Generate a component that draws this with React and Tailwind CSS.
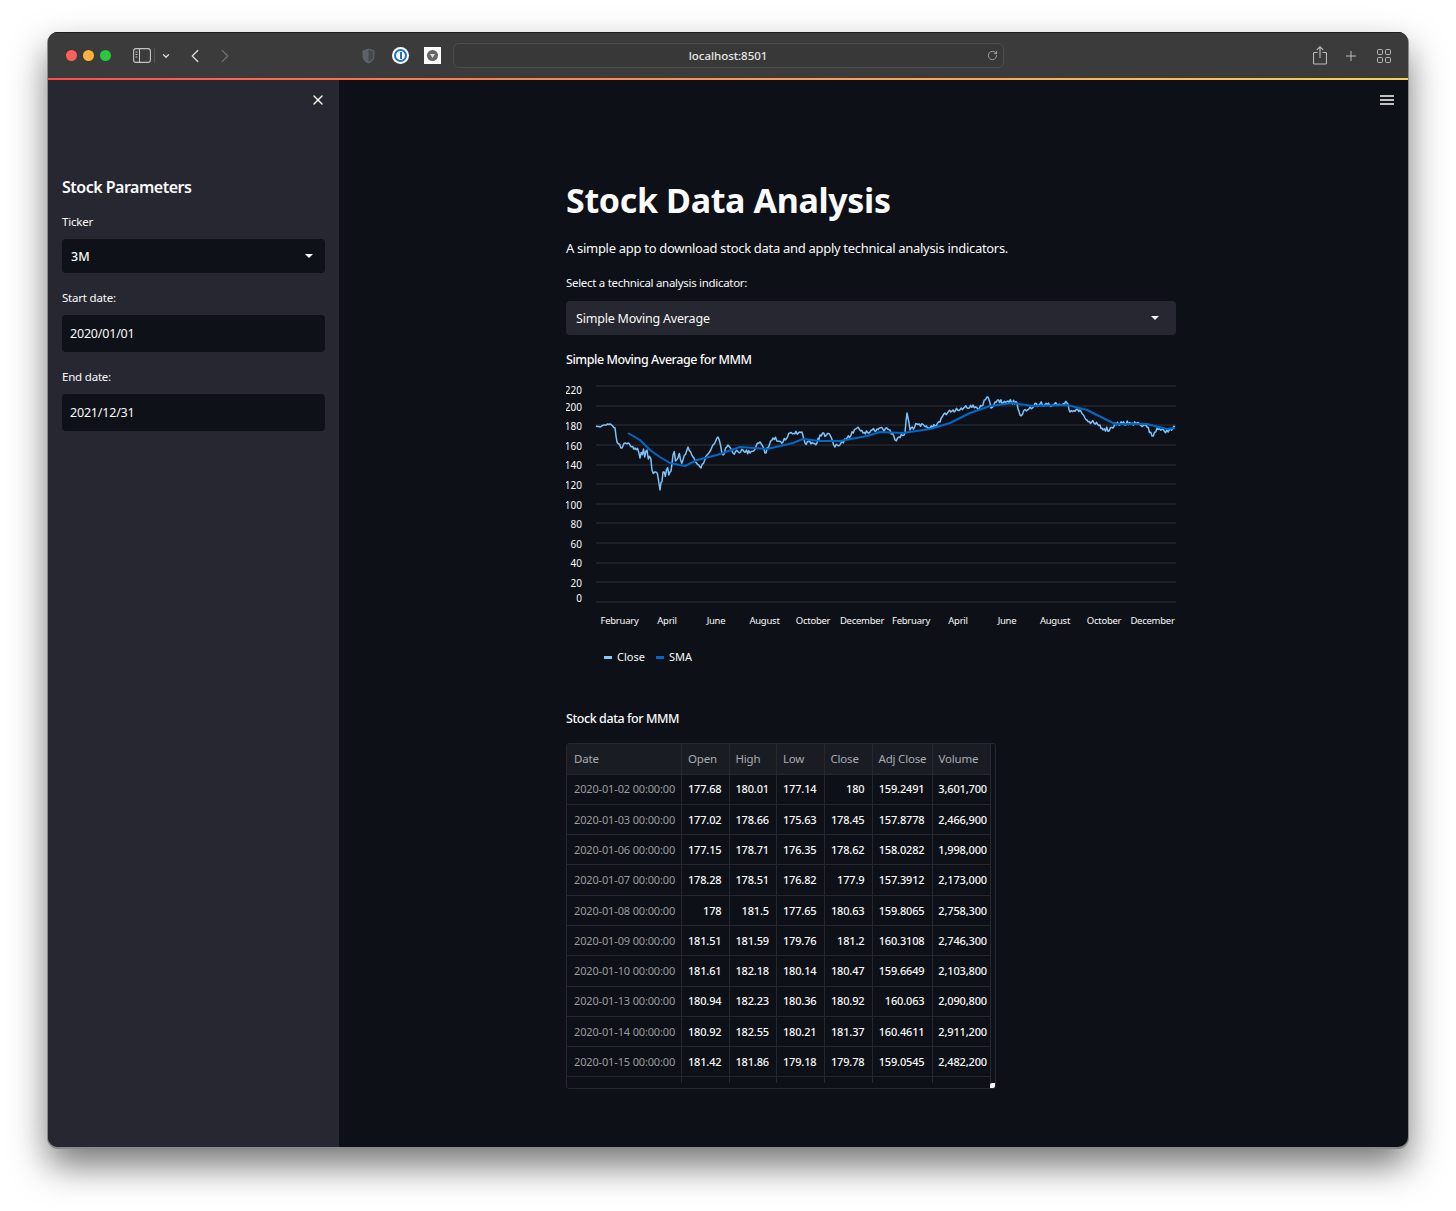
import { X, ChevronDown, ChevronLeft, ChevronRight, Plus, RotateCw } from 'lucide-react';

const closeKeys = [
  [596, 426], [600, 427], [604, 425], [610, 424], [615, 428], [617, 442], [622, 448], [625, 443], [628, 443],
  [635, 448], [640, 458], [647, 450], [652, 470], [656, 472], [660, 490], [663, 472], [670, 472], [673, 455],
  [683, 460], [688, 447], [693, 457], [701, 468], [707, 455], [712, 447], [718, 437], [723, 455], [728, 445],
  [733, 453], [743, 450], [750, 453], [760, 442], [765, 453], [773, 438], [783, 442], [790, 433], [802, 432],
  [805, 443], [817, 443], [820, 435], [830, 435], [835, 447], [847, 438], [857, 428], [863, 433], [870, 432],
  [877, 429], [890, 430], [895, 440], [905, 433], [907, 413], [910, 430], [917, 424], [930, 428], [940, 422],
  [945, 413], [953, 410], [973, 405], [978, 410], [988, 397], [991, 408], [995, 402], [1008, 401], [1017, 403],
  [1020, 415], [1030, 407], [1040, 404], [1057, 405], [1067, 403], [1070, 412], [1080, 410], [1087, 420],
  [1100, 425], [1103, 430], [1113, 428], [1115, 423], [1137, 423], [1147, 427], [1152, 436], [1157, 428],
  [1168, 432], [1175, 427],
];

const smaPoints = [
  [628, 433], [640, 440], [650, 450], [660, 457], [670, 463], [685, 466], [697, 460], [717, 455], [740, 447],
  [767, 449], [793, 443], [803, 439], [820, 441], [840, 441], [867, 436], [880, 432], [903, 433], [930, 429],
  [950, 423], [970, 413], [990, 406], [1013, 403], [1033, 406], [1067, 405], [1087, 410], [1103, 418],
  [1115, 424], [1147, 424], [1167, 429], [1175, 428],
];

// wiggle the close line between the key points so it reads like daily prices
function buildClose() {
  const pts = [];
  let seed = 7;
  for (let i = 0; i < closeKeys.length - 1; i++) {
    const [x1, y1] = closeKeys[i];
    const [x2, y2] = closeKeys[i + 1];
    const steps = Math.max(1, Math.round((x2 - x1) / 1.2));
    for (let s = 0; s < steps; s++) {
      seed = (seed * 16807) % 2147483647;
      const t = s / steps;
      const amp = x1 > 630 && x1 < 675 ? 6.5 : x1 < 615 ? 0.6 : 2.2;
      const n = s === 0 ? 0 : ((seed % 1000) / 1000 - 0.5) * amp * 2;
      pts.push(`${(x1 + (x2 - x1) * t).toFixed(1)},${(y1 + (y2 - y1) * t + n).toFixed(1)}`);
    }
  }
  pts.push('1175,427');
  return pts.join(' ');
}

const yTicks = [
  ['220', 386, 390], ['200', 406, 407], ['180', 425, 426], ['160', 445, 446], ['140', 465, 465.5], ['120', 484, 485],
  ['100', 504, 505], ['80', 523, 524], ['60', 543, 544], ['40', 563, 563.5], ['20', 582, 583], ['0', 602, 598],
];

const xTicks = [
  ['February', 619.5], ['April', 667], ['June', 716], ['August', 764.5], ['October', 813], ['December', 862],
  ['February', 911], ['April', 958], ['June', 1007], ['August', 1055], ['October', 1104], ['December', 1152.5],
];

const columns = ['Open', 'High', 'Low', 'Close', 'Adj Close', 'Volume'];

const rows = [
  ['2020-01-02 00:00:00', '177.68', '180.01', '177.14', '180', '159.2491', '3,601,700'],
  ['2020-01-03 00:00:00', '177.02', '178.66', '175.63', '178.45', '157.8778', '2,466,900'],
  ['2020-01-06 00:00:00', '177.15', '178.71', '176.35', '178.62', '158.0282', '1,998,000'],
  ['2020-01-07 00:00:00', '178.28', '178.51', '176.82', '177.9', '157.3912', '2,173,000'],
  ['2020-01-08 00:00:00', '178', '181.5', '177.65', '180.63', '159.8065', '2,758,300'],
  ['2020-01-09 00:00:00', '181.51', '181.59', '179.76', '181.2', '160.3108', '2,746,300'],
  ['2020-01-10 00:00:00', '181.61', '182.18', '180.14', '180.47', '159.6649', '2,103,800'],
  ['2020-01-13 00:00:00', '180.94', '182.23', '180.36', '180.92', '160.063', '2,090,800'],
  ['2020-01-14 00:00:00', '180.92', '182.55', '180.21', '181.37', '160.4611', '2,911,200'],
  ['2020-01-15 00:00:00', '181.42', '181.86', '179.18', '179.78', '159.0545', '2,482,200'],
];

const colWidths = ['w-[114.500px]', 'w-[47.500px]', 'w-[47.500px]', 'w-[47.500px]', 'w-[48px]', 'w-[60px]', 'w-[58.500px]'];

function Caret() {
  return (
    <svg width="8" height="4" viewBox="0 0 8 4" className="shrink-0">
      <path d="M0 0h8L4 4z" fill="#fafafa" />
    </svg>
  );
}

function Toolbar() {
  return (
    <div className="relative flex h-[46px] items-center border-t border-[#1e1e1e] bg-[#3b3b3b] pl-[18px] pr-[16px] text-[#c9c9c9]">
      <div className="flex gap-[6px]">
        <span className="h-[11px] w-[11px] rounded-full bg-[#fe5f57]" />
        <span className="h-[11px] w-[11px] rounded-full bg-[#fdb03d]" />
        <span className="h-[11px] w-[11px] rounded-full bg-[#29c83f]" />
      </div>
      <svg width="18" height="15" viewBox="0 0 18 15" fill="none" className="ml-[22px]">
        <rect x="0.6" y="0.6" width="16.8" height="13.8" rx="2.5" stroke="#c4c4c4" strokeWidth="1.1" />
        <path d="M6.5 1v13" stroke="#c4c4c4" strokeWidth="1.1" />
        <path d="M2.5 4h2M2.5 6.5h2M2.5 9h2" stroke="#c4c4c4" />
      </svg>
      <span className="ml-[3px] h-[15px] w-px bg-[#555555]" />
      <ChevronDown size={10} strokeWidth={3} className="ml-[6px] text-[#dddddd]" />
      <ChevronLeft size={22} strokeWidth={1.5} className="ml-[13px] text-[#d5d5d5]" />
      <ChevronRight size={22} strokeWidth={1.5} className="ml-[8px] text-[#6d6d6d]" />
      <svg width="13" height="16" viewBox="0 0 13 16" className="ml-[126px]">
        <path d="M6.5 0.5 12.5 2.5V8c0 3.5-2.5 6-6 7.5C3 14 .5 11.5.5 8V2.5z" fill="#5d6168" />
        <path d="M6.5 2 11.3 3.4V8c0 2.7-1.9 4.8-4.8 6.2z" fill="#44474c" />
      </svg>
      <div className="ml-[17px] flex h-[17px] w-[17px] items-center justify-center rounded-full bg-white">
        <div className="flex h-[13px] w-[13px] items-center justify-center rounded-full border-2 border-[#1a6fd0]">
          <span className="h-[7px] w-[2px] bg-[#1a6fd0]" />
        </div>
      </div>
      <div className="ml-[15px] flex h-[17px] w-[17px] items-center justify-center bg-white">
        <div className="flex h-[11px] w-[11px] items-center justify-center rounded-full bg-[#666666]">
          <svg width="5" height="4" viewBox="0 0 5 4"><path d="M0 0h5L2.500 4z" fill="#dddddd" /></svg>
        </div>
      </div>
      <div className="ml-[12px] flex h-[25px] w-[551px] items-center rounded-[6px] border border-[#4e4e4e] bg-[#383838] pr-[5px]">
        <span className="flex-1 pl-[15px] text-center text-[11.500px] font-medium tracking-[-0.05px] text-[#e6e6e6]">localhost:8501</span>
        <RotateCw size={11} strokeWidth={1.6} className="text-[#c4c4c4]" />
      </div>
      <svg width="14" height="19" viewBox="0 0 14 19" fill="none" className="ml-[309px]" stroke="#bdbdbd" strokeWidth="1.1">
        <path d="M4.500 6.500H1.500a1 1 0 0 0-1 1v9.500a1 1 0 0 0 1 1h11a1 1 0 0 0 1-1V7.500a1 1 0 0 0-1-1H9.500" />
        <path d="M7 12V.8M3.800 3.800 7 .8l3.200 3" />
      </svg>
      <Plus size={16} strokeWidth={1.3} className="ml-[16px] text-[#cfcfcf]" />
      <svg width="14" height="14" viewBox="0 0 14 14" fill="none" stroke="#bdbdbd" className="ml-[18px]">
        <rect x="0.500" y="0.500" width="5" height="5" rx="1" />
        <rect x="8.500" y="0.500" width="5" height="5" rx="1" />
        <rect x="0.500" y="8.500" width="5" height="5" rx="1" />
        <rect x="8.500" y="8.500" width="5" height="5" rx="1" />
      </svg>
    </div>
  );
}

function Sidebar() {
  return (
    <aside className="relative w-[291px] shrink-0 bg-[#262730] px-[14px] pt-[97px] text-[#fafafa]">
      <X size={16} strokeWidth={2} className="absolute right-[13px] top-[12px] text-[#fafafa]" />
      <h2 className="text-[16px] font-semibold leading-[20px] tracking-[-0.5px]">Stock Parameters</h2>
      <label className="mt-[17px] block text-[11.500px] leading-[16px] tracking-[-0.2px]">Ticker</label>
      <div className="mt-[9px] flex h-[34px] w-[263px] items-center justify-between rounded-[4px] bg-[#0e1117] pl-[9px] pr-[12px] text-[12.500px] font-medium">
        <span className="pt-[3px]">3M</span>
        <Caret />
      </div>
      <label className="mt-[17px] block text-[11.500px] leading-[16px] tracking-[-0.2px]">Start date:</label>
      <div className="mt-[9px] flex h-[37px] w-[263px] items-center rounded-[4px] bg-[#0e1117] pl-[8px] pt-[2px] text-[12.500px] tracking-[-0.2px]">2020/01/01</div>
      <label className="mt-[17px] block text-[11.500px] leading-[16px] tracking-[-0.2px]">End date:</label>
      <div className="mt-[9px] flex h-[37px] w-[263px] items-center rounded-[4px] bg-[#0e1117] pl-[8px] pt-[2px] text-[12.500px] tracking-[-0.2px]">2021/12/31</div>
    </aside>
  );
}

function Chart() {
  return (
    <svg width="610" height="255" viewBox="566 380 610 255" className="mt-[10px] block">
      {yTicks.map(([label, lineY, textY]) => (
        <g key={label}>
          <line x1="596" x2="1176" y1={lineY} y2={lineY} stroke="#2f3139" strokeWidth="1" />
          <text x="582" y={textY + 3.5} textAnchor="end" fontSize="10" fill="#fafafa">{label}</text>
        </g>
      ))}
      {xTicks.map(([label, x], i) => (
        <text key={i} x={x} y="623.500" textAnchor="middle" fontSize="9.500" letterSpacing="-0.25" fill="#fafafa">{label}</text>
      ))}
      <polyline points={buildClose()} fill="none" stroke="#7cc4fb" strokeWidth="1.5" strokeLinejoin="round" />
      <polyline points={smaPoints.map((p) => p.join(',')).join(' ')} fill="none" stroke="#0068c9" strokeWidth="2" strokeLinejoin="round" />
    </svg>
  );
}

function DataTable() {
  const cell = 'border-r border-b border-[#262730] pl-[5px] pr-[7px] pt-px text-right text-[11px] tracking-[-0.15px] text-[#fafafa] font-medium last:pr-[3px]';
  const head = 'whitespace-nowrap border-r border-b border-[#262730] px-[6px] text-left text-[11.500px] font-normal tracking-[-0.2px] text-[#a9abb0]';
  return (
    <div className="relative mt-[14px] h-[346px] w-[430px] overflow-hidden rounded-[3px] border border-[#262730]">
      <table className="w-[424px] table-fixed border-collapse">
        <colgroup>
          {colWidths.map((w, i) => <col key={i} className={w} />)}
        </colgroup>
        <thead>
          <tr className="h-[30px] bg-[#1a1c24]">
            <th className={`${head} pl-[7px]`}>Date</th>
            {columns.map((c) => (
              <th key={c} className={head}>{c}</th>
            ))}
          </tr>
        </thead>
        <tbody>
          {rows.map((row) => (
            <tr key={row[0]} className="h-[30.300px]">
              <td className="whitespace-nowrap border-r border-b border-[#262730] pl-[7px] pt-px text-[11px] tracking-[-0.15px] text-[#9c9c9c]">{row[0]}</td>
              {row.slice(1).map((v, i) => <td key={i} className={cell}>{v}</td>)}
            </tr>
          ))}
          <tr className="h-[6px]">
            {colWidths.map((w, i) => <td key={i} className="border-r border-[#262730]" />)}
          </tr>
        </tbody>
      </table>
      <span className="absolute bottom-0 right-0 h-[5px] w-[5px] rounded-tl-[2px] bg-white" />
    </div>
  );
}

export default function App() {
  return (
    <div className="min-h-[1211px] bg-white pb-[64px] pl-[48px] pr-[48px] pt-[32px] font-['Noto_Sans',sans-serif]">
      <div className="h-[1115px] w-[1360px] overflow-hidden rounded-[10px] bg-[#0d1017] shadow-[0_1px_0_1px_#8a8a8a,0_18px_36px_rgba(0,0,0,0.55)]">
        <Toolbar />
        <div className="h-[2px] bg-gradient-to-r from-[#ff4b4b] to-[#f8d04e]" />
        <div className="flex h-[1067px]">
          <Sidebar />
          <main className="relative flex-1 pl-[227px] pt-[96px] text-[#fafafa]">
            <svg width="14" height="10" viewBox="0 0 14 10" className="absolute right-[14px] top-[15px]">
              <path d="M0 1h14M0 5h14M0 9h14" stroke="#fafafa" strokeWidth="1.500" />
            </svg>
            <h1 className="text-[34px] font-bold leading-[48px] tracking-[-0.35px]">Stock Data Analysis</h1>
            <p className="mt-[14px] text-[13px] leading-[20px] tracking-[-0.3px]">A simple app to download stock data and apply technical analysis indicators.</p>
            <label className="mt-[17px] block text-[11.500px] leading-[16px] tracking-[-0.3px]">Select a technical analysis indicator:</label>
            <div className="mt-[10px] flex h-[34px] w-[610px] items-center justify-between rounded-[4px] bg-[#262730] pl-[10px] pr-[17px] text-[12.500px] tracking-[-0.2px]">
              <span className="pt-[2px]">Simple Moving Average</span>
              <Caret />
            </div>
            <h3 className="mt-[15px] text-[12.500px] font-medium leading-[20px] tracking-[-0.45px]">Simple Moving Average for MMM</h3>
            <Chart />
            <div className="ml-[38px] mt-[14px] flex h-[16px] items-center text-[11px]">
              <span className="h-[3px] w-[8px] bg-[#83c9ff]" />
              <span className="ml-[5px]">Close</span>
              <span className="ml-[11px] h-[3px] w-[8px] bg-[#0068c9]" />
              <span className="ml-[5px]">SMA</span>
            </div>
            <h3 className="mt-[44px] text-[12.500px] font-medium leading-[20px] tracking-[-0.43px]">Stock data for MMM</h3>
            <DataTable />
          </main>
        </div>
      </div>
    </div>
  );
}
